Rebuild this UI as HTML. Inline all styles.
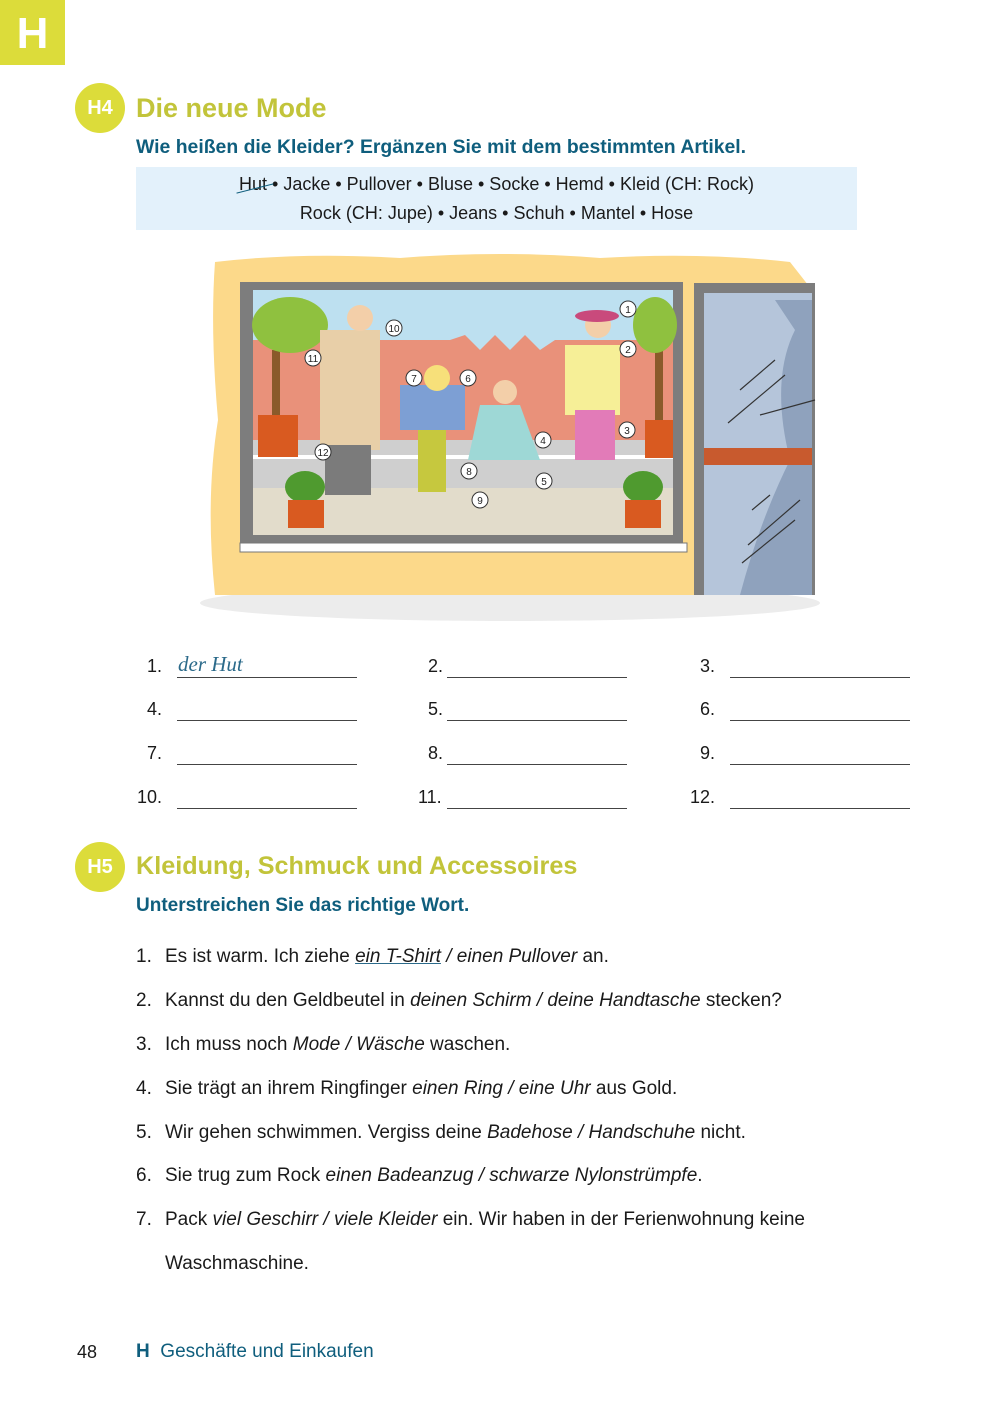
<!DOCTYPE html>
<html><head><meta charset="utf-8"><style>
body{margin:0;width:993px;height:1418px;position:relative;background:#fff;font-family:"Liberation Sans",sans-serif;color:#1a1a1a;overflow:hidden}
.a{position:absolute;white-space:nowrap}
.badge{position:absolute;width:50px;height:50px;border-radius:50%;background:#dcdc3a;color:#fff;font-weight:bold;font-size:20px;text-align:center;line-height:50px}
.h{color:#c2c43a;font-weight:bold;font-size:26px}
.sub{color:#0f5e7d;font-weight:bold;font-size:19px}
.ln{position:absolute;border-bottom:1px solid #444;width:180px;height:0}
.n{position:absolute;font-size:18px}
.it{position:absolute;font-size:19px;left:136px;white-space:nowrap}
.it span.num{display:inline-block;width:29px}
i{font-style:italic}
</style></head><body>
<div class="a" style="left:0;top:0;width:65px;height:65px;background:#dcdc3a;color:#fff;font-weight:bold;font-size:44px;text-align:center;line-height:68px">H</div>

<div class="badge" style="left:75px;top:83px">H4</div>
<div class="a h" style="left:136px;top:93px;font-size:27px">Die neue Mode</div>
<div class="a sub" style="left:136px;top:136px;font-size:19.4px">Wie heißen die Kleider? Ergänzen Sie mit dem bestimmten Artikel.</div>
<div class="a" style="left:136px;top:167px;width:721px;height:63px;background:#e3f1fb"></div>
<div class="a" style="left:136px;top:170px;width:721px;text-align:center;font-size:18px;line-height:29px"><span style="position:relative">Hut<span style="position:absolute;left:-3px;top:14px;width:38px;border-top:1.5px solid #0f5e7d;transform:rotate(-14deg)"></span></span> • Jacke • Pullover • Bluse • Socke • Hemd • Kleid (CH: Rock)<br>Rock (CH: Jupe) • Jeans • Schuh • Mantel • Hose</div>

<svg class="a" style="left:195px;top:250px" width="640" height="380" viewBox="195 250 640 380">
<ellipse cx="510" cy="603" rx="310" ry="18" fill="#ececec"/>
<path d="M215 262 Q300 252 400 258 Q500 250 600 258 Q700 252 790 262 L812 290 L815 595 L215 595 Q205 500 218 420 Q210 330 215 262Z" fill="#fcd98a"/>
<rect x="240" y="282" width="443" height="263" fill="#7d7d7d"/>
<rect x="253" y="290" width="420" height="245" fill="#bde0f0"/>
<path d="M253 340 L450 340 L465 335 L480 350 L495 335 L510 350 L525 335 L540 350 L555 340 L673 340 L673 445 L253 445Z" fill="#e9917a"/>
<rect x="253" y="440" width="420" height="50" fill="#cfcfcf"/>
<rect x="253" y="488" width="420" height="47" fill="#e2dccb"/>
<rect x="253" y="455" width="420" height="4" fill="#fff"/>
<rect x="240" y="543" width="447" height="9" fill="#fff" stroke="#777"/>
<rect x="272" y="350" width="8" height="75" fill="#8a5a2a"/><ellipse cx="290" cy="325" rx="38" ry="28" fill="#8fc13f"/>
<rect x="258" y="415" width="40" height="42" fill="#d95a20"/>
<rect x="655" y="350" width="8" height="75" fill="#8a5a2a"/><ellipse cx="655" cy="325" rx="22" ry="28" fill="#8fc13f"/>
<rect x="645" y="420" width="28" height="38" fill="#d95a20"/>
<ellipse cx="305" cy="487" rx="20" ry="16" fill="#4f9a2f"/><rect x="288" y="500" width="36" height="28" fill="#d95a20"/>
<ellipse cx="643" cy="487" rx="20" ry="16" fill="#4f9a2f"/><rect x="625" y="500" width="36" height="28" fill="#d95a20"/>
<rect x="320" y="330" width="60" height="120" fill="#e8cfa8"/><circle cx="360" cy="318" r="13" fill="#f3cfa9"/><rect x="325" y="445" width="46" height="50" fill="#7b7b7b"/>
<rect x="400" y="385" width="65" height="45" fill="#7d9fd4"/><circle cx="437" cy="378" r="13" fill="#f7e07a"/><rect x="418" y="430" width="28" height="62" fill="#c6c83e"/>
<path d="M480 405 L520 405 L540 460 L468 460Z" fill="#9ed8d6"/><circle cx="505" cy="392" r="12" fill="#f3cfa9"/>
<rect x="565" y="345" width="55" height="70" fill="#f6ef97"/><circle cx="598" cy="325" r="13" fill="#f3cfa9"/><ellipse cx="597" cy="316" rx="22" ry="6" fill="#c94a7c"/>
<rect x="575" y="410" width="40" height="50" fill="#e27bb8"/>
<rect x="694" y="283" width="121" height="312" fill="#7d7d7d"/>
<rect x="704" y="293" width="108" height="302" fill="#b5c5da"/>
<path d="M775 300 L812 300 L812 595 L740 595 Q760 520 790 460 Q770 380 795 330Z" fill="#8fa2bd"/>
<rect x="704" y="448" width="108" height="17" fill="#c85a2e"/>
<g stroke="#333" stroke-width="1.2"><line x1="740" y1="390" x2="775" y2="360"/><line x1="728" y1="423" x2="785" y2="375"/><line x1="760" y1="415" x2="815" y2="400"/><line x1="752" y1="510" x2="770" y2="495"/><line x1="748" y1="545" x2="800" y2="500"/><line x1="742" y1="563" x2="795" y2="520"/></g>
<g fill="#fff" stroke="#333" font-size="10" font-family="Liberation Sans">
<circle cx="628" cy="309" r="8"/><circle cx="628" cy="349" r="8"/><circle cx="627" cy="430" r="8"/><circle cx="543" cy="440" r="8"/><circle cx="544" cy="481" r="8"/><circle cx="468" cy="378" r="8"/><circle cx="414" cy="378" r="8"/><circle cx="469" cy="471" r="8"/><circle cx="480" cy="500" r="8"/><circle cx="394" cy="328" r="8"/><circle cx="313" cy="358" r="8"/><circle cx="323" cy="452" r="8"/></g>
<g font-size="10" font-family="Liberation Sans" text-anchor="middle" fill="#222">
<text x="628" y="313">1</text><text x="628" y="353">2</text><text x="627" y="434">3</text><text x="543" y="444">4</text><text x="544" y="485">5</text><text x="468" y="382">6</text><text x="414" y="382">7</text><text x="469" y="475">8</text><text x="480" y="504">9</text><text x="394" y="332">10</text><text x="313" y="362">11</text><text x="323" y="456">12</text></g>
</svg>

<div class="n" style="left:147px;top:656px">1.</div><div class="a" style="left:178px;top:652px;font-size:21px;font-style:italic;color:#2b6a8a;font-family:'Liberation Serif',serif">der Hut</div><div class="ln" style="left:177px;top:677px"></div>
<div class="n" style="left:428px;top:656px">2.</div><div class="ln" style="left:447px;top:677px"></div>
<div class="n" style="left:700px;top:656px">3.</div><div class="ln" style="left:730px;top:677px"></div>
<div class="n" style="left:147px;top:699px">4.</div><div class="ln" style="left:177px;top:720px"></div>
<div class="n" style="left:428px;top:699px">5.</div><div class="ln" style="left:447px;top:720px"></div>
<div class="n" style="left:700px;top:699px">6.</div><div class="ln" style="left:730px;top:720px"></div>
<div class="n" style="left:147px;top:743px">7.</div><div class="ln" style="left:177px;top:764px"></div>
<div class="n" style="left:428px;top:743px">8.</div><div class="ln" style="left:447px;top:764px"></div>
<div class="n" style="left:700px;top:743px">9.</div><div class="ln" style="left:730px;top:764px"></div>
<div class="n" style="left:137px;top:787px">10.</div><div class="ln" style="left:177px;top:808px"></div>
<div class="n" style="left:418px;top:787px">11.</div><div class="ln" style="left:447px;top:808px"></div>
<div class="n" style="left:690px;top:787px">12.</div><div class="ln" style="left:730px;top:808px"></div>

<div class="badge" style="left:75px;top:842px">H5</div>
<div class="a h" style="left:136px;top:852px;font-size:25.2px">Kleidung, Schmuck und Accessoires</div>
<div class="a sub" style="left:136px;top:895px">Unterstreichen Sie das richtige Wort.</div>

<div class="it" style="top:946px"><span class="num">1.</span>Es ist warm. Ich ziehe <i style="text-decoration:underline;text-decoration-color:#2b6a8a">ein T-Shirt</i> <i>/ einen Pullover</i> an.</div>
<div class="it" style="top:990px"><span class="num">2.</span>Kannst du den Geldbeutel in <i>deinen Schirm / deine Handtasche</i> stecken?</div>
<div class="it" style="top:1034px"><span class="num">3.</span>Ich muss noch <i>Mode / Wäsche</i> waschen.</div>
<div class="it" style="top:1078px"><span class="num">4.</span>Sie trägt an ihrem Ringfinger <i>einen Ring / eine Uhr</i> aus Gold.</div>
<div class="it" style="top:1122px"><span class="num">5.</span>Wir gehen schwimmen. Vergiss deine <i>Badehose / Handschuhe</i> nicht.</div>
<div class="it" style="top:1165px"><span class="num">6.</span>Sie trug zum Rock <i>einen Badeanzug / schwarze Nylonstrümpfe</i>.</div>
<div class="it" style="top:1209px"><span class="num">7.</span>Pack <i>viel Geschirr / viele Kleider</i> ein. Wir haben in der Ferienwohnung keine</div>
<div class="it" style="top:1253px"><span class="num"></span>Waschmaschine.</div>

<div class="a" style="left:77px;top:1342px;font-size:18px">48</div>
<div class="a" style="left:136px;top:1341px;font-size:19px;color:#0f5e7d"><b>H</b>&nbsp; Geschäfte und Einkaufen</div>
</body></html>
